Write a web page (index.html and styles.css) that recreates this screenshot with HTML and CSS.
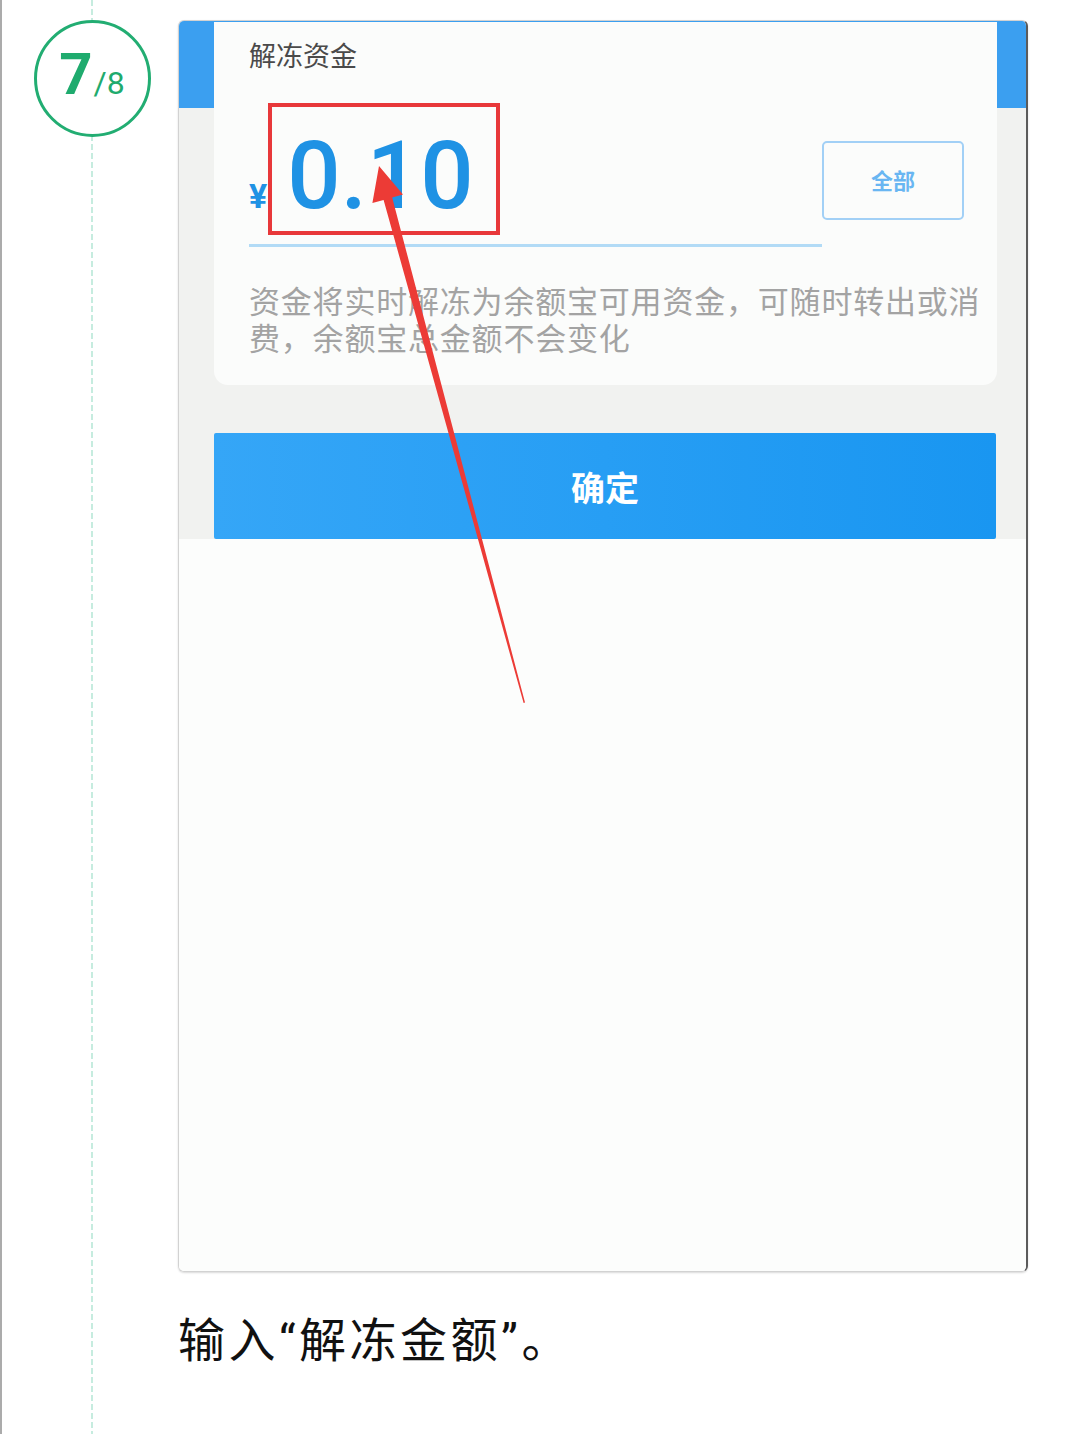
FILE: index.html
```html
<!DOCTYPE html>
<html lang="zh-CN">
  <head>
    <meta charset="UTF-8" />
    <meta name="viewport" content="width=device-width, initial-scale=1.0" />
    <title>步骤 7/8</title>
    <link rel="stylesheet" href="styles.css">
  </head>
  <body>
    <div class="page">
      <div class="rail">
        <div class="step-num">
          <span class="step-text"><span class="step-cur">7</span><span class="step-total">/8</span></span>
        </div>
      </div>

      <div class="step">
        <div class="frame">
          <div class="shot">
            <div class="shot-top">
              <div class="card">
                <div class="card-title">解冻资金</div>
                <div class="amount-row">
                  <div class="amount-field">
                    <span class="currency">¥</span>
                    <span class="amount">0.10</span>
                  </div>
                  <div class="btn-all">全部</div>
                </div>
                <p class="card-desc">资金将实时解冻为余额宝可用资金，可随时转出或消费，余额宝总金额不会变化</p>
              </div>
              <div class="btn-ok">确定</div>
            </div>
            <div class="shot-body"></div>
          </div>

          <!-- annotation drawn over the screenshot -->
          <svg class="mark" width="847" height="1249" viewBox="0 0 847 1249">
            <rect x="91" y="84" width="228" height="128" fill="none" stroke="#e8383a" stroke-width="4" />
            <polygon fill="#ec3b36"
              points="200,145 224,173.6 213.2,176.6 346,681.6 344.6,682 204.6,179 193.4,182" />
          </svg>
        </div>

        <p class="caption">输入“解冻金额”。</p>
      </div>
    </div>
  </body>
</html>
```

FILE: styles.css
```css
body {
  margin: 0;
  background: #fff;
  font-family: "Noto Sans CJK SC", sans-serif;
}

.page {
  display: flex;
  min-height: 1434px;
  border-left: 2px solid #ababab;
  box-sizing: border-box;
}

/* left column: step badge + dashed timeline */
.rail {
  width: 176px;
  flex-shrink: 0;
  padding-left: 4px;
  box-sizing: border-box;
  display: flex;
  flex-direction: column;
  align-items: center;
  background: linear-gradient(#c6ecdf 66%, transparent 0) 89px 0 / 2px 9px repeat-y;
}

.step-num {
  width: 117px;
  height: 117px;
  margin-top: 20px;
  box-sizing: border-box;
  border: 3px solid #22ad72;
  border-radius: 50%;
  background: #fff;
  display: flex;
  justify-content: center;
  align-items: center;
  color: #1fab6e;
  font-family: Roboto, sans-serif;
}

.step-text {
  line-height: 58px;
  margin-top: 6px;
}

.step-cur {
  font-size: 58px;
  font-weight: bold;
}

.step-total {
  font-size: 32px;
  line-height: 1;
  margin-left: 1px;
}

.step {
  width: 850px;
  padding-top: 20px;
}

/* screenshot frame */
.frame {
  position: relative;
  height: 1252px;
  box-sizing: border-box;
  border: 1px solid #d2d2d2;
  border-right: 2px solid #5b5b5b;
  border-radius: 6px;
  overflow: hidden;
  box-shadow: 0 1px 2px rgba(0, 0, 0, 0.15);
}

.shot {
  display: flex;
  flex-direction: column;
  height: 100%;
}

.shot-top {
  padding: 0 29px 0 35px;
  background: linear-gradient(#3b9ff0 0 87px, #f1f2f0 87px);
}

.card {
  margin-top: 1px;
  padding: 16px 15px 30px 35px;
  background: #fbfcfb;
  border-radius: 0 0 14px 14px;
}

.card-title {
  font-size: 27px;
  line-height: 34px;
  color: #4a4a4a;
}

.amount-row {
  display: flex;
  align-items: flex-start;
  margin-top: 36px;
}

.amount-field {
  flex: 1;
  display: flex;
  align-items: baseline;
  padding: 21px 0 21px;
  border-bottom: 3px solid #b2dbf6;
  color: #1f92e4;
  font-family: Roboto, sans-serif;
}

.currency {
  font-size: 34px;
  font-weight: bold;
  margin-right: 20px;
}

.amount {
  font-size: 94px;
  font-weight: 500;
  line-height: 1;
}

.btn-all {
  width: 142px;
  height: 79px;
  margin: 33px 18px 0 0;
  box-sizing: border-box;
  border: 2px solid #a2d0f6;
  border-radius: 5px;
  display: flex;
  justify-content: center;
  align-items: center;
  padding-bottom: 4px;
  font-size: 22px;
  font-weight: bold;
  color: #69b6f2;
}

.card-desc {
  margin: 34px 0 0;
  font-size: 31px;
  line-height: 37px;
  letter-spacing: 0.8px;
  color: #a3a3a3;
}

.btn-ok {
  height: 106px;
  margin-top: 48px;
  margin-right: 1px;
  display: flex;
  justify-content: center;
  align-items: center;
  background: linear-gradient(to right, #35a6f7, #1996f1);
  border-radius: 2px;
  font-size: 34px;
  font-weight: bold;
  color: #fff;
}

.shot-body {
  flex: 1;
  background: #fcfdfc;
}

.mark {
  position: absolute;
  left: 0;
  top: 0;
}

.caption {
  margin: 37px 0 0;
  font-family: Roboto, "Noto Sans CJK SC", sans-serif;
  font-size: 47px;
  line-height: 64px;
  letter-spacing: 3.5px;
  color: #111;
}
```
